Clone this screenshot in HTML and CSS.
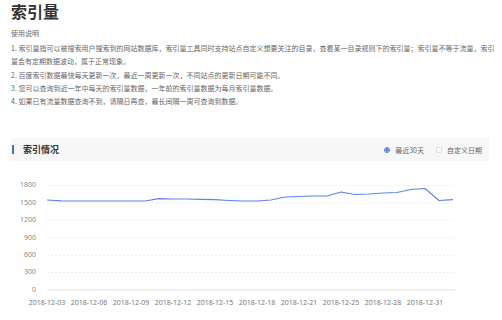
FILE: index.html
```html
<!DOCTYPE html>
<html lang="zh-CN">

<head>
    <meta charset="UTF-8">
    <meta name="viewport" content="width=device-width, initial-scale=1.0">
    <title>索引量</title>
    <link rel="stylesheet" href="styles.css">
</head>

<body>
    <div class="wrap">
        <h1 class="title">索引量</h1>
        <div class="desc">
            <p class="head">使用说明</p>
            <p>1. 索引量指可以被搜索用户搜索到的网站数据库，索引量工具同时支持站点自定义想要关注的目录，查看某一目录规则下的索引量；索引量不等于流量，索引量会有定期数据波动，属于正常现象。</p>
            <p>2. 百度索引数据最快每天更新一次，最近一周更新一次，不同站点的更新日期可能不同。</p>
            <p>3. 您可以查询到近一年中每天的索引量数据，一年前的索引量数据为每月索引量数据。</p>
            <p>4. 如果已有流量数据查询不到，请隔日再查，最长间隔一周可查询到数据。</p>
        </div>

        <div class="panel-head">
            <h2>索引情况</h2>
            <div class="range">
                <label class="opt"><span class="radio on"></span>最近30天</label>
                <label class="opt"><span class="check"></span>自定义日期</label>
            </div>
        </div>

        <svg class="chart" width="480" height="145" viewBox="0 0 480 145"></svg>
    </div>
    <script>
        // 最近30天索引量
        const data = [
            ['2018-12-03', 1550], ['2018-12-04', 1537], ['2018-12-05', 1533], ['2018-12-06', 1533],
            ['2018-12-07', 1533], ['2018-12-08', 1533], ['2018-12-09', 1533], ['2018-12-10', 1533],
            ['2018-12-11', 1573], ['2018-12-12', 1567], ['2018-12-13', 1567], ['2018-12-14', 1562],
            ['2018-12-15', 1555], ['2018-12-16', 1542], ['2018-12-17', 1533], ['2018-12-18', 1533],
            ['2018-12-19', 1550], ['2018-12-20', 1602], ['2018-12-21', 1610], ['2018-12-22', 1619],
            ['2018-12-23', 1619], ['2018-12-25', 1688], ['2018-12-26', 1645], ['2018-12-27', 1654],
            ['2018-12-28', 1671], ['2018-12-29', 1679], ['2018-12-30', 1731], ['2018-12-31', 1748],
            ['2019-01-01', 1542], ['2019-01-02', 1555]
        ]

        const svg = document.querySelector('.chart')
        const NS = 'http://www.w3.org/2000/svg'
        const plot = { left: 36, right: 444, top: 14.5, bottom: 119, step: 14, max: 1800 }

        function el(name, attrs, text) {
            const node = document.createElementNS(NS, name)
            for (const k in attrs) node.setAttribute(k, attrs[k])
            if (text !== undefined) node.textContent = text
            svg.appendChild(node)
            return node
        }

        const yOf = v => plot.bottom - (v / plot.max) * (plot.bottom - plot.top)

        // 网格线和纵轴刻度
        for (let v = 0; v <= plot.max; v += 300) {
            const y = yOf(v)
            if (v > 0) {
                el('line', { x1: plot.left, x2: plot.right, y1: y, y2: y, class: 'grid' })
            }
            el('text', { x: 25, y: y, class: 'ylab' }, v)
        }
        el('line', { x1: plot.left, x2: plot.right, y1: plot.bottom, y2: plot.bottom, class: 'axis' })

        // 横轴日期，每3天一个
        data.forEach((d, i) => {
            if (i % 3 === 0) {
                el('text', { x: plot.left + i * plot.step, y: 132, class: 'xlab' }, d[0])
            }
        })

        // 折线
        const pts = data.map((d, i) => (plot.left + i * plot.step) + ',' + yOf(d[1]).toFixed(1)).join(' ')
        el('polyline', { points: pts, class: 'line' })
    </script>
</body>

</html>
```

FILE: styles.css
```css
body {
    margin: 0;
    padding: 0 11px;
    overflow: hidden;
    background: #fff;
    color: #333;
    font-family: "Noto Sans CJK SC", "Noto Sans", sans-serif;
}

.title {
    margin: 0;
    font-size: 16px;
    line-height: 22px;
    font-weight: 700;
    color: #333;
}

.desc {
    margin-top: 5.4px;
    margin-right: -4px;
    font-size: 7px;
    line-height: 13.2px;
    color: #666;
}

.desc p {
    margin: 0;
}

.desc .head {
    margin-bottom: 1.5px;
}

.panel-head {
    margin-top: 30px;
    margin-right: 2px;
    height: 23px;
    padding: 0 7px 0 1px;
    background: #f7f7f7;
    display: flex;
    align-items: center;
    justify-content: space-between;
}

.panel-head h2 {
    margin: 0;
    font-size: 9px;
    font-weight: 700;
    color: #333;
    display: flex;
    align-items: center;
    gap: 9.5px;
}

.panel-head h2:before {
    content: "";
    width: 1.5px;
    height: 9px;
    background: #3a6fd8;
}

.range {
    display: flex;
    align-items: center;
    gap: 12px;
    font-size: 7px;
    color: #666;
}

.opt {
    display: flex;
    align-items: center;
    gap: 5px;
    cursor: pointer;
}

.radio,
.check {
    width: 6px;
    height: 6px;
    box-sizing: border-box;
    background: #fff;
}

.radio {
    border: 0.8px solid #3d80e6;
    border-radius: 50%;
}

.radio.on {
    background: radial-gradient(circle, #3d80e6 1.4px, #fff 1.9px);
}

.check {
    border: 0.8px solid #ddd;
    border-radius: 1px;
}

.chart {
    display: block;
    margin-top: 10px;
    font-family: "Noto Sans", "Noto Sans CJK SC", sans-serif;
}

.chart .grid {
    stroke: #e8e8e8;
    stroke-width: 0.8;
    stroke-dasharray: 2 2;
}

.chart .axis {
    stroke: #e3e3e3;
    stroke-width: 1;
}

.chart .ylab {
    font-size: 7px;
    fill: #888;
    text-anchor: end;
    dominant-baseline: middle;
}

.chart .xlab {
    font-size: 7px;
    fill: #777;
    text-anchor: middle;
    dominant-baseline: middle;
}

.chart .line {
    fill: none;
    stroke: #5b86e5;
    stroke-width: 1.2;
    stroke-linejoin: round;
}
```
